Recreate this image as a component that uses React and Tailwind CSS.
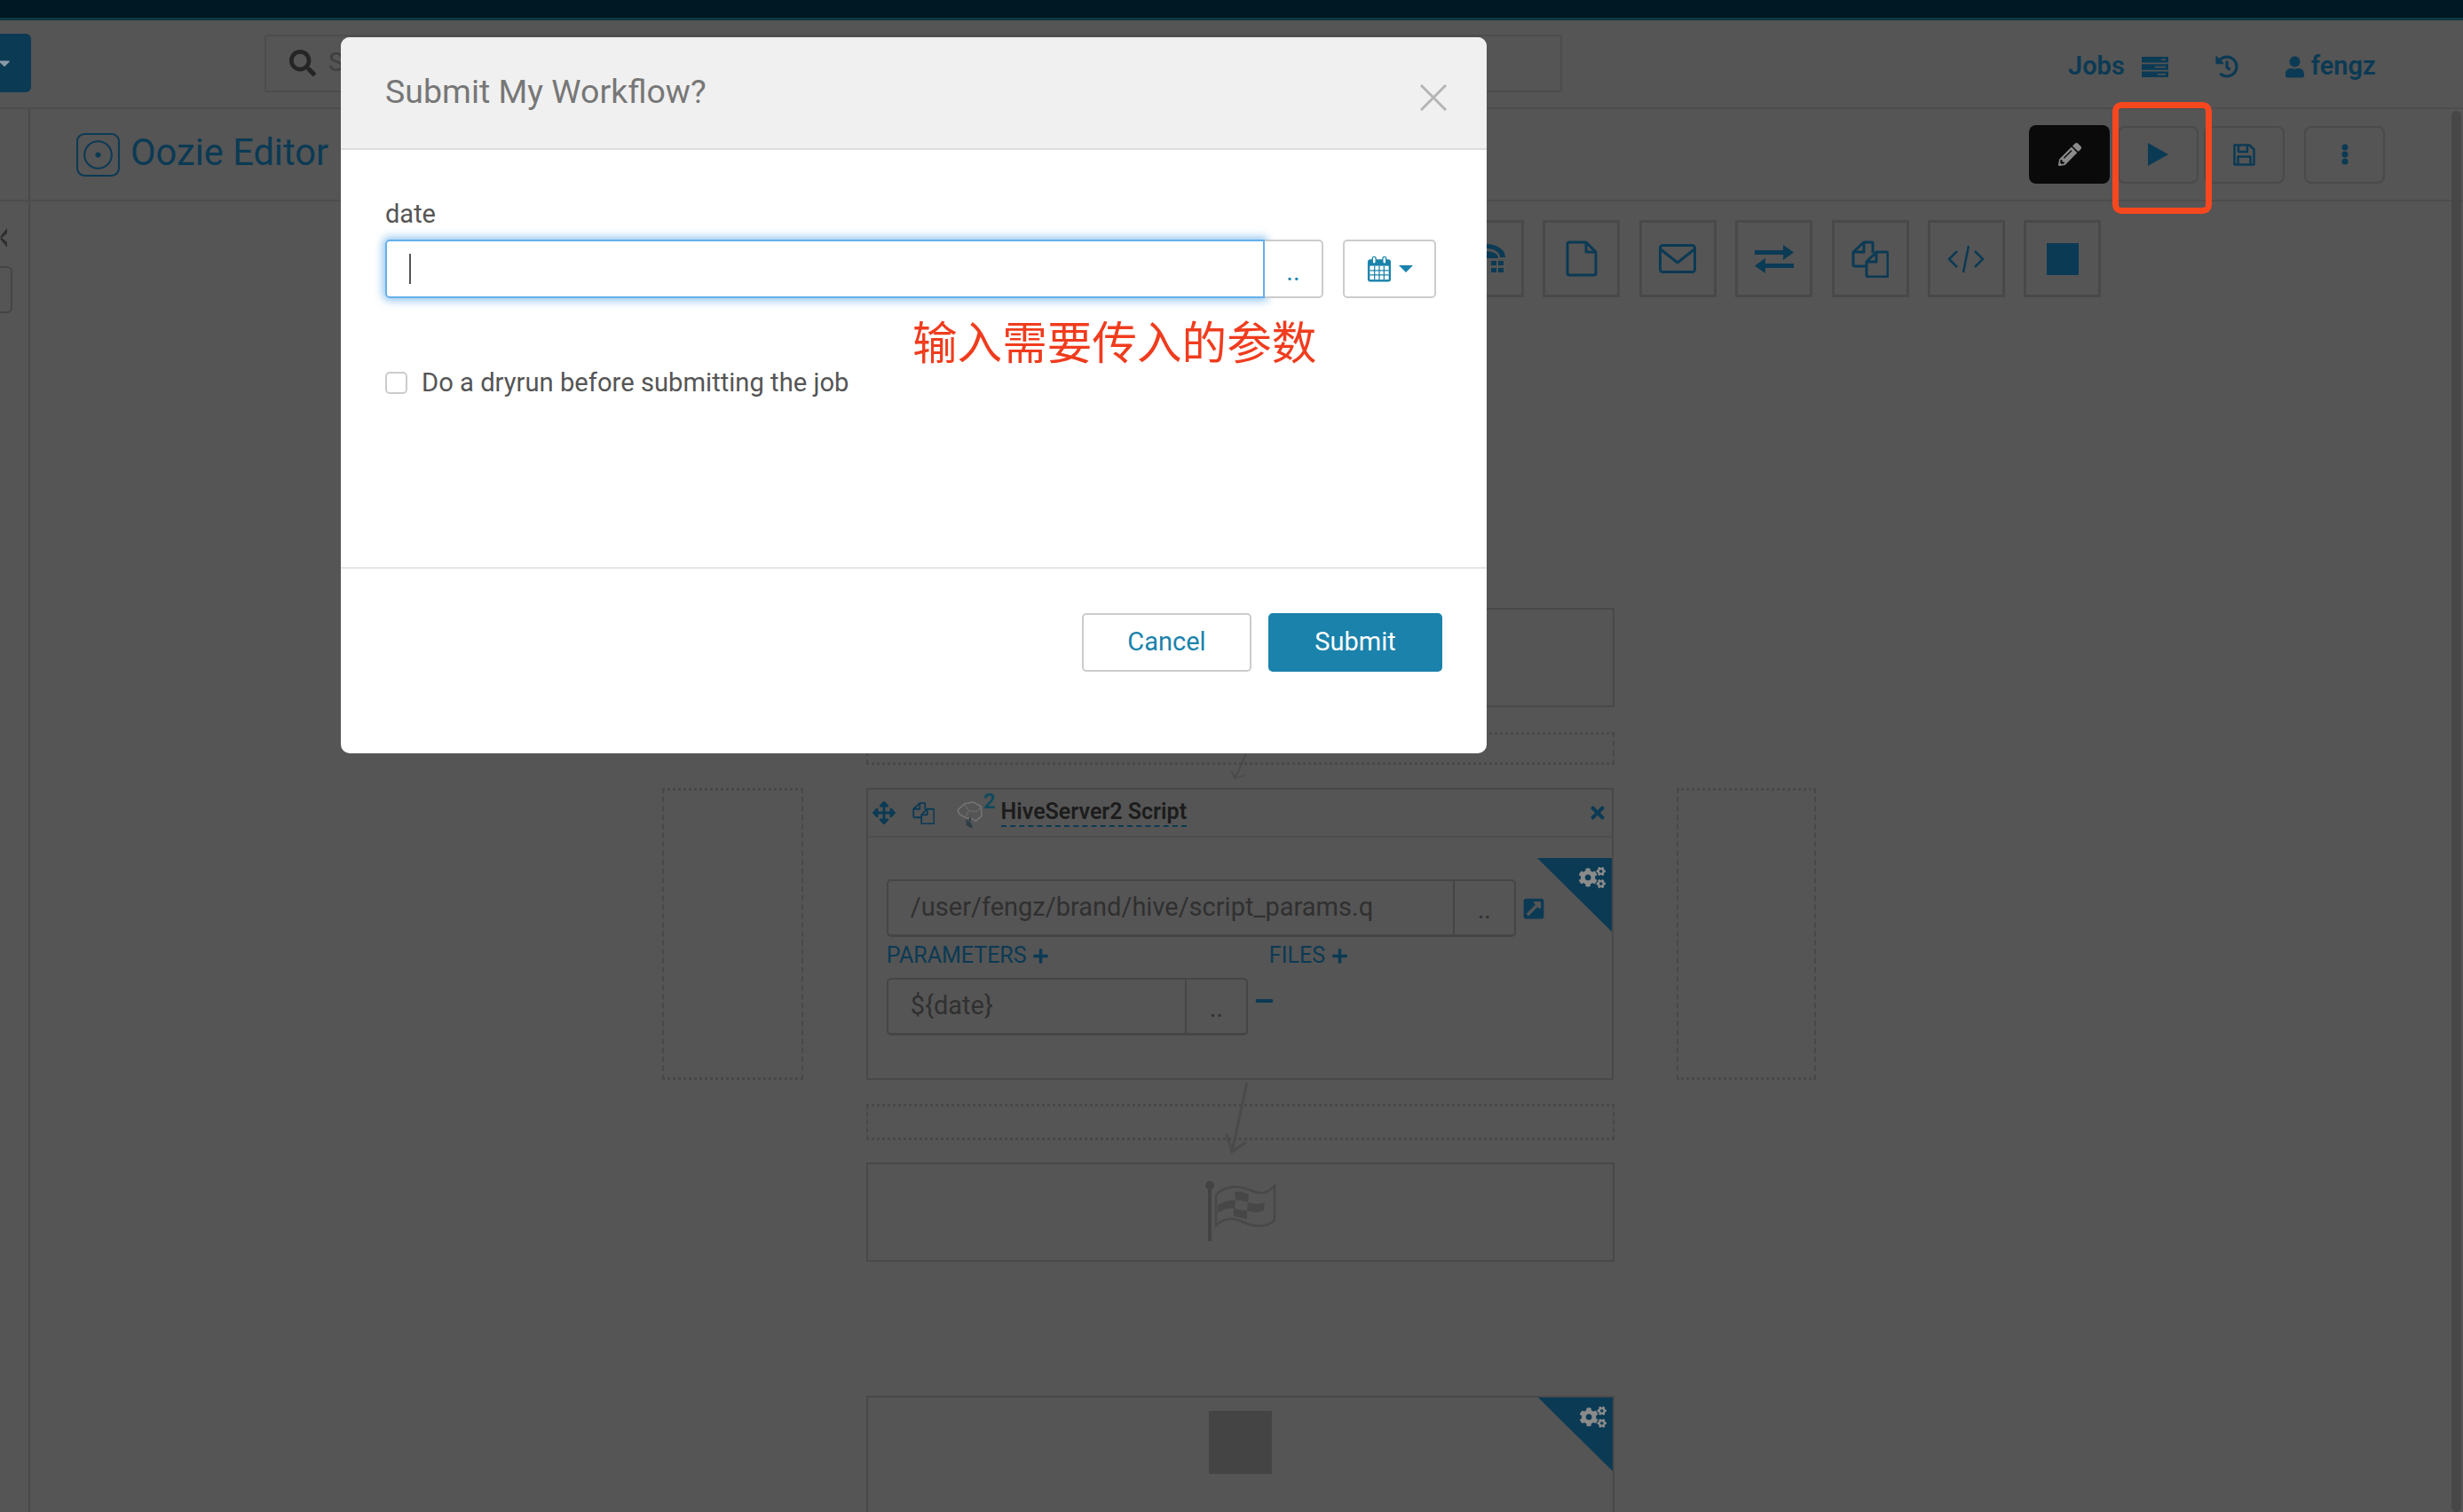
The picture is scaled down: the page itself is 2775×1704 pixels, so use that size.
import {
  FaSearch,
  FaCaretDown,
  FaUser,
  FaHistory,
  FaPencilAlt,
  FaArrowsAlt,
  FaPlus,
  FaMinus,
  FaTimes,
  FaCogs,
  FaExternalLinkSquareAlt,
} from "react-icons/fa";

const navy = "text-[#0b3a54]";

function CopyIcon({ className }) {
  return (
    <svg viewBox="0 0 42 42" className={className} fill="none" stroke="currentColor" strokeWidth="3" strokeLinejoin="round">
      <path d="M24 14V3a1 1 0 0 0-1-1H14L2 13v14a2 2 0 0 0 2 2h13" />
      <path d="M14 2v11H2" />
      <path d="M28 13h11a2 2 0 0 1 2 2v24a2 2 0 0 1-2 2H19a2 2 0 0 1-2-2V24z" fill="#555555" />
      <path d="M28 13v11H17" />
    </svg>
  );
}

function FileIcon({ className }) {
  return (
    <svg viewBox="0 0 36 41" className={className} fill="none" stroke="currentColor" strokeWidth="3" strokeLinejoin="round">
      <path d="M23 2H4a2 2 0 0 0-2 2v33a2 2 0 0 0 2 2h28a2 2 0 0 0 2-2V13z" />
      <path d="M23 2v11h11" />
    </svg>
  );
}

function EnvelopeIcon({ className }) {
  return (
    <svg viewBox="0 0 42 33" className={className} fill="none" stroke="currentColor" strokeWidth="3" strokeLinejoin="round">
      <rect x="1.500" y="1.500" width="39" height="30" rx="3" />
      <path d="M2 6l19 15L40 6" />
    </svg>
  );
}

function ExchangeIcon({ className }) {
  return (
    <svg viewBox="0 0 44 32" className={className} fill="currentColor">
      <path d="M0 6h32V0l12 8.500L32 17v-6H0z" />
      <path d="M44 21H12v-6L0 23.500 12 32v-6h32z" />
    </svg>
  );
}

function CodeIcon({ className }) {
  return (
    <svg viewBox="0 0 42 32" className={className} fill="none" stroke="currentColor" strokeWidth="2.500">
      <path d="M11 7l-9 9 9 9M31 7l9 9-9 9" />
      <path d="M24 1l-6 30" />
    </svg>
  );
}

function DatabaseIcon({ className }) {
  return (
    <svg viewBox="0 0 44 33" className={className} fill="currentColor">
      <path d="M0 15C0 6 10 0 22 0s22 6 22 15h-6C38 9 31 5 22 5S6 9 6 15z" />
      <path d="M8 16c0-5 6-8 14-8s14 3 14 8z" />
      <rect x="28" y="19" width="6" height="5" />
      <rect x="36" y="19" width="6" height="5" />
      <rect x="28" y="27" width="6" height="5" />
      <rect x="36" y="27" width="6" height="5" />
    </svg>
  );
}

function ServerIcon({ className }) {
  return (
    <svg viewBox="0 0 30 23" className={className} fill="currentColor">
      <rect x="0" y="0" width="30" height="6.500" />
      <rect x="0" y="8.300" width="30" height="6.500" />
      <rect x="0" y="16.500" width="30" height="6.500" />
      <rect x="22" y="2.500" width="5" height="1.500" fill="#555555" />
      <rect x="15" y="10.800" width="12" height="1.500" fill="#555555" />
      <rect x="18" y="19" width="9" height="1.500" fill="#555555" />
    </svg>
  );
}

function FloppyIcon({ className }) {
  return (
    <svg viewBox="0 0 25 25" className={className} fill="none" stroke="currentColor" strokeWidth="2.500" strokeLinejoin="round">
      <path d="M1.500 1.500h17l5 5v17h-22z" />
      <path d="M6 2v7h10V2" />
      <path d="M5.500 23v-8.500h14V23" />
    </svg>
  );
}

function HiveIcon({ className }) {
  return (
    <svg viewBox="0 0 34 34" className={className} fill="none">
      <path d="M1 11l8-7 10-2 9 5 1 11-7 6-5-3-7-1-7-4z" stroke="#777777" strokeWidth="1.500" />
      <path d="M9 5l5 7 9 1 5-6M14 12l-4 7" stroke="#6a6a6a" strokeWidth="1.200" />
      <path d="M16 20c-2 4-2 8 2 12M11 23c1 3 3 5 6 5M11 27c2 2 4 3 6 4" stroke="#2c3c46" strokeWidth="2" />
    </svg>
  );
}

function FlagIcon({ className }) {
  return (
    <svg viewBox="0 0 80 70" className={className} fill="none">
      <circle cx="5" cy="5" r="5" fill="#434343" />
      <rect x="3" y="5" width="4" height="63" fill="#434343" />
      <path d="M12 16C20 6 36 4 50 10s20 4 28-5v39c-8 9-23 8-36 2s-22-4-30 4z" stroke="#484848" strokeWidth="2.500" />
      <path d="M14 27c8-5 14-6 20-5l-1 9c-6-1-12 0-19 5zM33 12c5-1 10 0 16 3l-1 9c-5-2-10-3-14-2zM48 24c6 2 13 3 19 0l-1 9c-6 3-12 3-19 0zM32 31c6 1 10 2 15 2v10c-6-1-11-3-15-3z" fill="#474747" />
    </svg>
  );
}

// connector between two workflow rows
function ArrowDown({ className }) {
  return (
    <svg viewBox="0 0 30 80" preserveAspectRatio="none" className={className} fill="none" stroke="#4a4a4a" strokeWidth="3">
      <path d="M25 0L8 78" />
      <path d="M2 58l6 20 16-11" />
    </svg>
  );
}

function DropZone({ className = "" }) {
  return (
    <div className={`border-x-2 border-y-[3px] border-dotted border-[#484848] [border-left-style:dashed] [border-right-style:dashed] ${className}`} />
  );
}

function CornerTab({ className = "" }) {
  return (
    <div className={`absolute right-0 h-[83px] w-[84px] ${className}`}>
      <svg viewBox="0 0 84 83" className="h-full w-full">
        <polygon points="0,0 84,0 84,83" fill="#0b3a54" />
      </svg>
      <FaCogs className="absolute right-[7px] top-[8px] h-[28px] w-[30px] text-[#8a8a8a]" />
    </div>
  );
}

function ToolbarButton({ children, className = "" }) {
  return (
    <button className={`flex h-[65px] w-[91px] items-center justify-center rounded-[8px] border-2 border-[#4a4a4a] ${navy} ${className}`}>
      {children}
    </button>
  );
}

function Tile({ children }) {
  return (
    <div className={`flex h-[87px] w-[87px] shrink-0 items-center justify-center border-[3px] border-[#494949] ${navy}`}>
      {children}
    </div>
  );
}

function PathField({ value, className = "" }) {
  return (
    <div className={`flex h-[65px] rounded-[5px] border-2 border-b-[3px] border-[#454545] text-[29px] text-[#303030] ${className}`}>
      <span className="flex flex-1 items-center pl-[25px]">{value}</span>
      <span className="flex w-[69px] items-center justify-center border-l-2 border-[#454545] pt-[6px]">..</span>
    </div>
  );
}

export default function App() {
  return (
    <div className="relative h-[1704px] w-full overflow-hidden bg-[#555555] font-['Roboto','Noto_Sans_CJK_SC',sans-serif]">
      <div className="h-[23px] border-b-[3px] border-[#0f3a40] bg-[#001824]" />

      {/* main nav */}
      <header className="flex h-[100px] items-center border-b-2 border-[#4d4d4d] pb-[2px]">
        <button className="flex h-[66px] w-[35px] items-center justify-start rounded-r-[6px] bg-[#0b3a54] text-[#8a9aa5]">
          <FaCaretDown className="h-[20px] w-[20px] -translate-x-[5px]" />
        </button>
        <div className="ml-[263px] flex h-[65px] w-[1462px] items-center rounded-[3px] border-2 border-[#4c4c4c] pl-[26px] text-[29px] text-[#3e3e3e]">
          <FaSearch className="h-[30px] w-[30px] text-[#252525]" />
          <span className="ml-[14px]">S</span>
        </div>
        <nav className={`ml-[570px] mt-[8px] flex items-center text-[29px] font-semibold ${navy}`}>
          <span>Jobs</span>
          <ServerIcon className="ml-[19px] h-[23px] w-[30px]" />
          <FaHistory className="ml-[53px] h-[26px] w-[26px]" />
          <FaUser className="ml-[53px] h-[25px] w-[21px]" />
          <span className="ml-[8px]">fengz</span>
        </nav>
      </header>

      {/* editor title and actions */}
      <div className="flex h-[104px] items-center border-b-2 border-[#4d4d4d]">
        <div className="h-full w-[34px] border-r-2 border-[#4a4a4a]" />
        <svg viewBox="0 0 48 48" className={`ml-[52px] h-[49px] w-[49px] ${navy}`} fill="none" stroke="currentColor" strokeWidth="2">
          <rect x="1" y="1" width="46" height="46" rx="8" />
          <circle cx="24" cy="24" r="15" />
          <circle cx="24" cy="24" r="2" fill="currentColor" />
        </svg>
        <span className={`ml-[12px] -translate-y-[2px] text-[41.600px] ${navy}`}>Oozie Editor</span>
        <div className="ml-auto mr-[88px] flex items-center gap-[8px]">
          <button className="mr-[1px] flex h-[66px] w-[91px] items-center justify-center rounded-[8px] bg-[#0a0a0a] text-[#8a8a8a]">
            <FaPencilAlt className="h-[26px] w-[26px]" />
          </button>
          <ToolbarButton>
            <svg viewBox="0 0 23 26" className="h-[26px] w-[23px]" fill="currentColor">
              <polygon points="0,0 23,13 0,26" />
            </svg>
          </ToolbarButton>
          <ToolbarButton className="-ml-[2px]">
            <FloppyIcon className="h-[25px] w-[25px]" />
          </ToolbarButton>
          <ToolbarButton className="ml-[14px]">
            <svg viewBox="0 0 8 24" className="h-[24px] w-[8px]" fill="currentColor">
              <circle cx="4" cy="4" r="3.500" />
              <circle cx="4" cy="12" r="3.500" />
              <circle cx="4" cy="20" r="3.500" />
            </svg>
          </ToolbarButton>
        </div>
      </div>

      <div className="flex">
        {/* collapsed left panel */}
        <aside className="h-[1500px] w-[34px] border-r-2 border-[#4a4a4a] pt-[30px]">
          <svg viewBox="0 0 8 22" className="h-[22px] w-[8px]" fill="#2e2e2e">
            <path d="M0 10L8 0v6L2 11zM0 12l8 10v-6l-6-5z" />
          </svg>
          <div className="-ml-[20px] mt-[21px] h-[53px] w-[34px] rounded-[6px] border-2 border-[#444444]" />
        </aside>

        {/* workflow canvas */}
        <main className="flex-1 pt-[21px]">
          <div className="ml-[1596px] flex gap-[21.400px]">
            <Tile><DatabaseIcon className="h-[33px] w-[44px]" /></Tile>
            <Tile><FileIcon className="h-[41px] w-[36px]" /></Tile>
            <Tile><EnvelopeIcon className="h-[33px] w-[42px]" /></Tile>
            <Tile><ExchangeIcon className="h-[32px] w-[44px]" /></Tile>
            <Tile><CopyIcon className="h-[42px] w-[42px]" /></Tile>
            <Tile><CodeIcon className="h-[32px] w-[42px]" /></Tile>
            <Tile><div className="h-[36px] w-[36px] bg-current" /></Tile>
          </div>

          <div className="relative ml-[712px] w-[1300px] pt-[350px]">
            <div className="ml-[230px] h-[112px] w-[843px] border-2 border-[#484848]" />
            <DropZone className="ml-[230px] mt-[28px] h-[37px] w-[843px]" />
            <ArrowDown className="absolute left-[640px] top-[513px] h-[30px] w-[22px]" />

            <div className="mt-[26px] flex h-[329px] gap-[71px]">
              <DropZone className="w-[159px]" />

              {/* hive action node */}
              <section className="relative w-[843px] border-2 border-[#484848]">
                <div className={`flex h-[54px] items-center border-b-2 border-[#4d4d4d] pl-[5px] ${navy}`}>
                  <FaArrowsAlt className="h-[26px] w-[26px]" />
                  <CopyIcon className="ml-[19px] h-[25px] w-[25px]" />
                  <HiveIcon className="ml-[25px] mt-[5px] h-[33px] w-[33px]" />
                  <span className="relative -top-[13px] -ml-[3px] text-[24px] font-semibold text-[#0d4a5c]">2</span>
                  <span className="ml-[6px] border-b-2 border-dashed border-[#0b3a54] text-[25px] font-semibold leading-[30px] text-[#1c1c1c]">
                    HiveServer2 Script
                  </span>
                  <FaTimes className="ml-auto mr-[7px] h-[22px] w-[18px]" />
                </div>
                <CornerTab className="top-[77px]" />
                <div className="ml-[21px] mt-[47px] flex items-center">
                  <PathField value="/user/fengz/brand/hive/script_params.q" className="w-[709px]" />
                  <FaExternalLinkSquareAlt className={`ml-[7px] h-[26px] w-[26px] ${navy}`} />
                </div>
                <div className={`ml-[21px] mt-[5px] flex h-[32px] items-center text-[25px] ${navy}`}>
                  <span className="flex w-[431px] items-center">
                    PARAMETERS
                    <FaPlus className="ml-[6px] h-[19px] w-[19px]" />
                  </span>
                  <span className="flex items-center">
                    FILES
                    <FaPlus className="ml-[7px] h-[19px] w-[19px]" />
                  </span>
                </div>
                <div className="ml-[21px] mt-[9px] flex items-start">
                  <PathField value="${date}" className="w-[407px]" />
                  <FaMinus className={`ml-[7px] mt-[15px] h-[22px] w-[23px] ${navy}`} />
                </div>
              </section>

              <DropZone className="w-[157px]" />
            </div>

            <DropZone className="ml-[230px] mt-[27px] h-[41px] w-[843px]" />
            <ArrowDown className="absolute left-[634px] top-[885px] h-[80px] w-[30px]" />

            <div className="ml-[230px] mt-[25px] flex h-[112px] w-[843px] items-center justify-center border-2 border-[#484848]">
              <FlagIcon className="h-[70px] w-[80px]" />
            </div>

            <div className="relative ml-[230px] mt-[151px] flex h-[160px] w-[843px] items-start justify-center border-2 border-[#484848] pt-[15px]">
              <div className="h-[71px] w-[71px] bg-[#444444]" />
              <CornerTab className="top-0" />
            </div>
          </div>
        </main>
      </div>

      <div className="absolute bottom-0 right-[2px] top-[125px] w-[11px] rounded-full bg-[#474747]" />

      {/* red annotation around the run button */}
      <div className="absolute left-[2380px] top-[115px] h-[126px] w-[112px] rounded-[10px] border-[7px] border-[#f7471f]" />

      <div role="dialog" className="absolute left-[384px] top-[42px] flex h-[807px] w-[1291px] flex-col overflow-hidden rounded-[10px] bg-white">
        <div className="flex h-[127px] shrink-0 items-center justify-between border-b-2 border-[#dddddd] bg-[#f0f0f0] pb-[2px] pl-[50px] pr-[45px]">
          <h3 className="text-[37.500px] font-normal text-[#777777]">Submit My Workflow?</h3>
          <svg viewBox="0 0 30 30" className="mt-[12px] h-[30px] w-[30px]" stroke="#b5b5b5" strokeWidth="3">
            <path d="M1 1l28 28M29 1L1 29" />
          </svg>
        </div>

        <div className="relative h-[472px] shrink-0 border-b-2 border-[#e5e5e5] pl-[50px]">
          <label className="mt-[52px] block text-[29px] leading-[40px] text-[#555555]">date</label>
          <div className="mt-[9px] flex h-[66px]">
            <div className="flex w-[991px] items-center rounded-l-[5px] border-2 border-[#66afe9] pl-[25px] shadow-[0_0_10px_3px_rgba(102,175,233,0.7)]">
              <span className="h-[34px] w-[2px] bg-[#555555]" />
            </div>
            <button className="relative flex w-[66px] items-center justify-center rounded-r-[5px] border-2 border-l-0 border-[#cccccc] bg-white pt-[8px] text-[29px] text-[#1a82ab]">
              ..
            </button>
            <button className="relative ml-[22px] flex w-[105px] items-center justify-center gap-[8px] rounded-[5px] border-2 border-[#cccccc] text-[#1a82ab]">
              <svg viewBox="0 0 28 30" className="h-[29px] w-[28px]" fill="none" stroke="currentColor">
                <rect x="1" y="4" width="26" height="25" rx="2" fill="currentColor" />
                <path d="M3 11h22v16H3z" fill="#ffffff" stroke="none" />
                <path d="M3 16.500h22M3 21.500h22M8.500 11v16M14 11v16M19.500 11v16" strokeWidth="1.300" />
                <rect x="6" y="0.500" width="4" height="8" rx="2" fill="#ffffff" strokeWidth="1.300" />
                <rect x="18" y="0.500" width="4" height="8" rx="2" fill="#ffffff" strokeWidth="1.300" />
              </svg>
              <span className="h-0 w-0 border-x-[8px] border-t-[8px] border-x-transparent border-t-[#1a82ab]" />
            </button>
          </div>
          <label className="mt-[74px] flex items-center gap-[16px] text-[29.200px] text-[#555555]">
            <span className="h-[25px] w-[25px] rounded-[5px] border-2 border-[#cccccc]" />
            Do a dryrun before submitting the job
          </label>
          <span className="absolute left-[644px] top-[184px] text-[50.600px] leading-[70px] text-[#f03c1e]">
            输入需要传入的参数
          </span>
        </div>

        <div className="flex justify-end gap-[19px] pr-[50px] pt-[50px]">
          <button className="h-[66px] w-[191px] rounded-[5px] border-2 border-[#cccccc] text-[29px] text-[#1a82ab]">
            Cancel
          </button>
          <button className="h-[66px] w-[196px] rounded-[5px] bg-[#1a82ab] text-[29px] text-white">
            Submit
          </button>
        </div>
      </div>
    </div>
  );
}
